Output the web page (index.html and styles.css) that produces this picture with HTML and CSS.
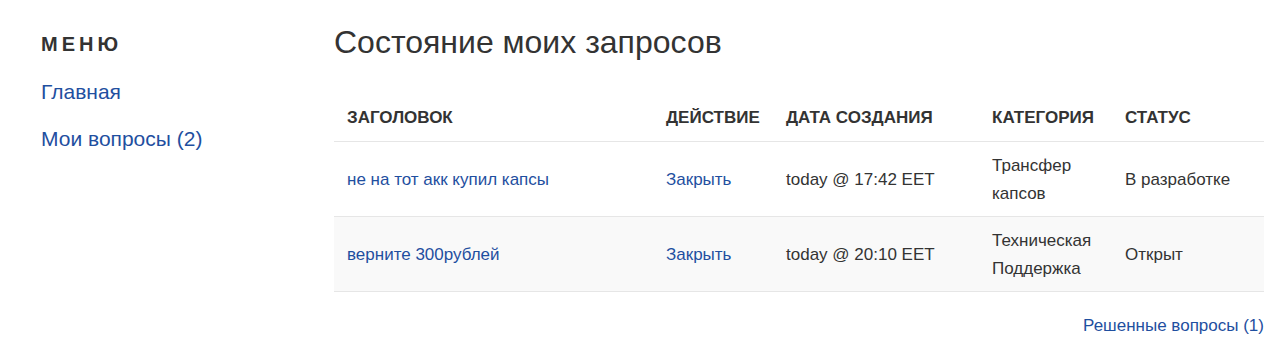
FILE: index.html
```html
<!DOCTYPE html>
<html lang="ru">
<head>
    <meta charset="UTF-8">
    <meta name="viewport" content="width=device-width, initial-scale=1.0">
    <title>Состояние моих запросов</title>
    <link rel="stylesheet" href="styles.css">
</head>
<body>
    <div class="page">
        <!-- Sidebar menu -->
        <aside class="sidebar">
            <h3 class="menu-title">Меню</h3>
            <ul class="menu">
                <li><a href="#">Главная</a></li>
                <li><a href="#">Мои вопросы (2)</a></li>
            </ul>
        </aside>

        <main class="content">
            <h1>Состояние моих запросов</h1>
            <table class="requests">
                <thead>
                    <tr>
                        <th class="col-title">Заголовок</th>
                        <th class="col-action">Действие</th>
                        <th class="col-date">Дата создания</th>
                        <th class="col-cat">Категория</th>
                        <th class="col-status">Статус</th>
                    </tr>
                </thead>
                <tbody>
                    <tr>
                        <td><a href="#">не на тот акк купил капсы</a></td>
                        <td><a href="#">Закрыть</a></td>
                        <td>today @ 17:42 EET</td>
                        <td>Трансфер капсов</td>
                        <td>В разработке</td>
                    </tr>
                    <tr>
                        <td><a href="#">верните 300рублей</a></td>
                        <td><a href="#">Закрыть</a></td>
                        <td>today @ 20:10 EET</td>
                        <td>Техническая Поддержка</td>
                        <td>Открыт</td>
                    </tr>
                </tbody>
            </table>
            <div class="solved">
                <a href="#">Решенные вопросы (1)</a>
            </div>
        </main>
    </div>
</body>
</html>
```

FILE: styles.css
```css
body {
    font-family: Arial, "Liberation Sans", sans-serif;
    margin: 0;
    padding: 0;
    background-color: #fff;
    color: #333;
}
a {
    color: #1f4fa0;
    text-decoration: none;
}
.page {
    display: flex;
    padding: 0 16px 0 41px;
}
.sidebar {
    width: 293px;
    flex-shrink: 0;
}
.menu-title {
    margin: 33px 0 0;
    font-size: 20px;
    line-height: 22px;
    font-weight: bold;
    letter-spacing: 4px;
    text-transform: uppercase;
    color: #333;
}
.menu {
    list-style: none;
    margin: 25px 0 0;
    padding: 0;
}
.menu li {
    font-size: 21px;
    line-height: 24px;
    margin-bottom: 23px;
}
.content {
    flex: 1;
}
.content h1 {
    margin: 24px 0 0;
    font-size: 32px;
    line-height: 36px;
    font-weight: normal;
    color: #333;
}
.requests {
    width: 100%;
    border-collapse: collapse;
    margin-top: 34px;
    font-size: 17px;
}
.requests th, .requests td {
    text-align: left;
    padding: 10px 13px 8px;
    line-height: 28px;
    vertical-align: middle;
    border-bottom: 1px solid #e6e6e6;
}
.requests th {
    font-size: 17px;
    text-transform: uppercase;
    padding-bottom: 9px;
}
.requests tbody tr:nth-child(even) {
    background-color: #f9f9f9;
}
.col-title { width: 293px; }
.col-action { width: 94px; }
.col-date { width: 180px; }
.col-cat { width: 107px; }
.solved {
    text-align: right;
    margin-top: 24px;
    font-size: 17px;
}
```
